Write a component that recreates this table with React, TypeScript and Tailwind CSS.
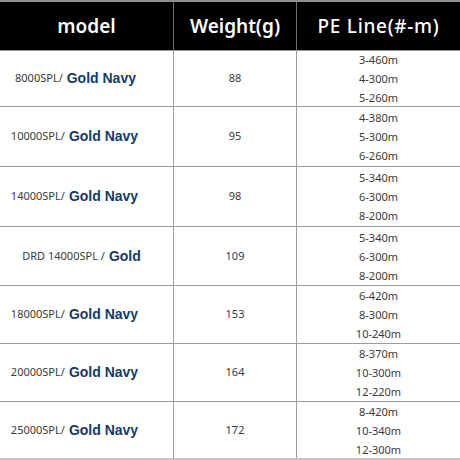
const rows = [
  { code: '8000SPL/', name: 'Gold Navy', weight: '88', pe: ['3-460m', '4-300m', '5-260m'], h: 'h-[56px]', pad: 'pr-[22px]' },
  { code: '10000SPL/', name: 'Gold Navy', weight: '95', pe: ['4-380m', '5-300m', '6-260m'], h: 'h-[60px]', pad: 'pr-[24px]' },
  { code: '14000SPL/', name: 'Gold Navy', weight: '98', pe: ['5-340m', '6-300m', '8-200m'], h: 'h-[60px]', pad: 'pr-[24px]' },
  { code: 'DRD 14000SPL /', name: 'Gold', weight: '109', pe: ['5-340m', '6-300m', '8-200m'], h: 'h-[59px]', pad: 'pr-[10px]' },
  { code: '18000SPL/', name: 'Gold Navy', weight: '153', pe: ['6-420m', '8-300m', '10-240m'], h: 'h-[58px]', pad: 'pr-[24px]' },
  { code: '20000SPL/', name: 'Gold Navy', weight: '164', pe: ['8-370m', '10-300m', '12-220m'], h: 'h-[58px]', pad: 'pr-[24px]' },
  { code: '25000SPL/', name: 'Gold Navy', weight: '172', pe: ['8-420m', '10-340m', '12-300m'], h: 'h-[57px]', pad: 'pr-[24px]' },
];

export default function App() {
  return (
    <div className="w-[460px] h-[460px] bg-white overflow-hidden font-['Noto_Sans','Liberation_Sans',sans-serif]">
      {/* header */}
      <div className="flex h-[50px] bg-black border-t-2 border-[#8f8f8f] text-white text-[19px]">
        <div className="w-[174px] flex items-center justify-center font-semibold border-r border-[#6b6b6b]">model</div>
        <div className="w-[123px] flex items-center justify-center font-semibold border-r border-[#6b6b6b]">Weight(g)</div>
        <div className="flex-1 flex items-center justify-center font-medium tracking-[0.7px]">PE Line(#-m)</div>
      </div>

      {rows.map((r, i) => (
        <div key={i} className={`flex ${r.h} border-t border-[#9c9c9c] text-[#3a3a3a]`}>
          <div className={`w-[174px] flex items-center justify-center gap-[4px] border-r border-[#9c9c9c] ${r.pad}`}>
            <span className="text-[11px]">{r.code}</span>
            <span className="text-[14px] font-bold text-[#173a62] font-['Liberation_Sans',sans-serif]">{r.name}</span>
          </div>
          <div className="w-[123px] flex items-center justify-center text-[11px] border-r border-[#9c9c9c]">{r.weight}</div>
          <div className="flex-1 flex flex-col items-center justify-center text-[11px] leading-[19px]">
            {r.pe.map((p) => (
              <span key={p}>{p}</span>
            ))}
          </div>
        </div>
      ))}
      <div className="h-[3px] bg-[#c4c4c4]" />
    </div>
  );
}
